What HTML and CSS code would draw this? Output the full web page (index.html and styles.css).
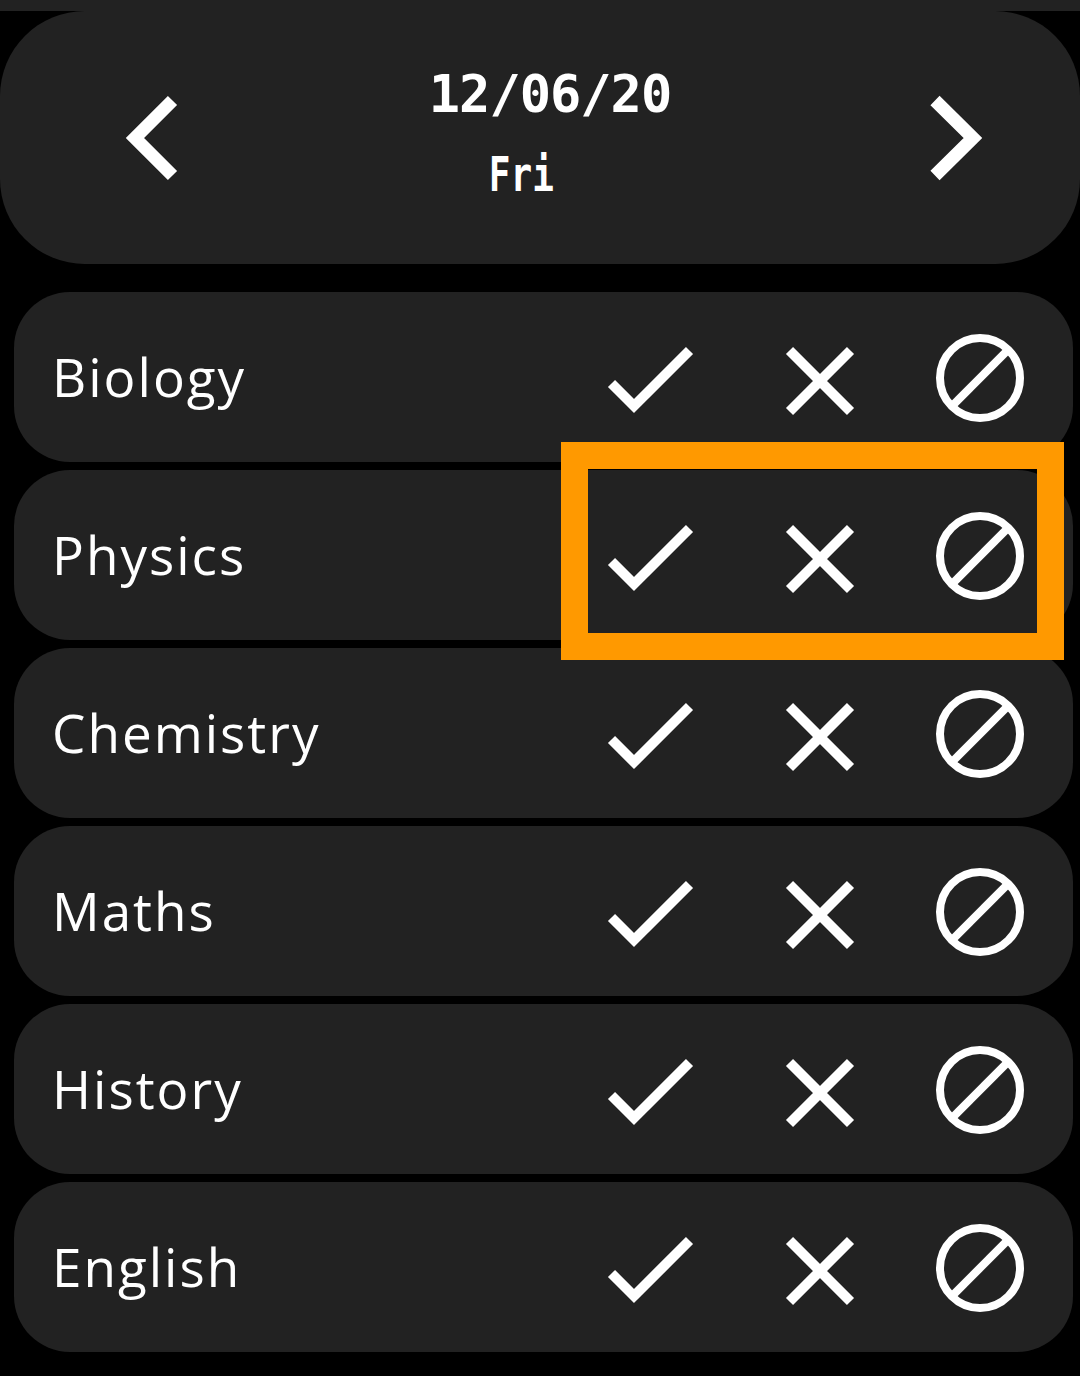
FILE: index.html
```html
<!DOCTYPE html>
<html>
<head>
<meta charset="utf-8">
<link rel="stylesheet" href="styles.css">
</head>
<body>
<div class="topbar"></div>
<header class="datebar">
  <svg class="chev chev-left" width="100" height="100" viewBox="0 0 100 100"><polyline points="72.5,12.5 35,50 72.5,87.5" fill="none" stroke="#fff" stroke-width="13" stroke-linejoin="miter"/></svg>
  <div class="datecol">
    <div class="date">12/06/20</div>
    <div class="day">Fri</div>
  </div>
  <svg class="chev chev-right" width="100" height="100" viewBox="0 0 100 100"><polyline points="35,12.5 73,50 35,87.5" fill="none" stroke="#fff" stroke-width="13" stroke-linejoin="miter"/></svg>
</header>
<main class="list">
  <div class="row"><span class="label">Biology</span><div class="icons">
    <svg class="ic ic-check" width="100" height="100" viewBox="0 0 100 100"><polyline points="11.5,56.5 34,79 89.5,23.5" fill="none" stroke="#fff" stroke-width="10"/></svg>
    <svg class="ic ic-x" width="100" height="100" viewBox="0 0 100 100"><path d="M19.5 23.5 L80.5 84.5 M80.5 23.5 L19.5 84.5" stroke="#fff" stroke-width="10"/></svg>
    <svg class="ic ic-o" width="100" height="100" viewBox="0 0 100 100"><circle cx="50" cy="51" r="40" fill="none" stroke="#fff" stroke-width="8"/><line x1="21.7" y1="79.3" x2="78.3" y2="22.7" stroke="#fff" stroke-width="8"/></svg>
  </div></div>
  <div class="row"><span class="label">Physics</span><div class="icons">
    <svg class="ic ic-check" width="100" height="100" viewBox="0 0 100 100"><polyline points="11.5,56.5 34,79 89.5,23.5" fill="none" stroke="#fff" stroke-width="10"/></svg>
    <svg class="ic ic-x" width="100" height="100" viewBox="0 0 100 100"><path d="M19.5 23.5 L80.5 84.5 M80.5 23.5 L19.5 84.5" stroke="#fff" stroke-width="10"/></svg>
    <svg class="ic ic-o" width="100" height="100" viewBox="0 0 100 100"><circle cx="50" cy="51" r="40" fill="none" stroke="#fff" stroke-width="8"/><line x1="21.7" y1="79.3" x2="78.3" y2="22.7" stroke="#fff" stroke-width="8"/></svg>
  </div></div>
  <div class="row"><span class="label">Chemistry</span><div class="icons">
    <svg class="ic ic-check" width="100" height="100" viewBox="0 0 100 100"><polyline points="11.5,56.5 34,79 89.5,23.5" fill="none" stroke="#fff" stroke-width="10"/></svg>
    <svg class="ic ic-x" width="100" height="100" viewBox="0 0 100 100"><path d="M19.5 23.5 L80.5 84.5 M80.5 23.5 L19.5 84.5" stroke="#fff" stroke-width="10"/></svg>
    <svg class="ic ic-o" width="100" height="100" viewBox="0 0 100 100"><circle cx="50" cy="51" r="40" fill="none" stroke="#fff" stroke-width="8"/><line x1="21.7" y1="79.3" x2="78.3" y2="22.7" stroke="#fff" stroke-width="8"/></svg>
  </div></div>
  <div class="row"><span class="label">Maths</span><div class="icons">
    <svg class="ic ic-check" width="100" height="100" viewBox="0 0 100 100"><polyline points="11.5,56.5 34,79 89.5,23.5" fill="none" stroke="#fff" stroke-width="10"/></svg>
    <svg class="ic ic-x" width="100" height="100" viewBox="0 0 100 100"><path d="M19.5 23.5 L80.5 84.5 M80.5 23.5 L19.5 84.5" stroke="#fff" stroke-width="10"/></svg>
    <svg class="ic ic-o" width="100" height="100" viewBox="0 0 100 100"><circle cx="50" cy="51" r="40" fill="none" stroke="#fff" stroke-width="8"/><line x1="21.7" y1="79.3" x2="78.3" y2="22.7" stroke="#fff" stroke-width="8"/></svg>
  </div></div>
  <div class="row"><span class="label">History</span><div class="icons">
    <svg class="ic ic-check" width="100" height="100" viewBox="0 0 100 100"><polyline points="11.5,56.5 34,79 89.5,23.5" fill="none" stroke="#fff" stroke-width="10"/></svg>
    <svg class="ic ic-x" width="100" height="100" viewBox="0 0 100 100"><path d="M19.5 23.5 L80.5 84.5 M80.5 23.5 L19.5 84.5" stroke="#fff" stroke-width="10"/></svg>
    <svg class="ic ic-o" width="100" height="100" viewBox="0 0 100 100"><circle cx="50" cy="51" r="40" fill="none" stroke="#fff" stroke-width="8"/><line x1="21.7" y1="79.3" x2="78.3" y2="22.7" stroke="#fff" stroke-width="8"/></svg>
  </div></div>
  <div class="row"><span class="label">English</span><div class="icons">
    <svg class="ic ic-check" width="100" height="100" viewBox="0 0 100 100"><polyline points="11.5,56.5 34,79 89.5,23.5" fill="none" stroke="#fff" stroke-width="10"/></svg>
    <svg class="ic ic-x" width="100" height="100" viewBox="0 0 100 100"><path d="M19.5 23.5 L80.5 84.5 M80.5 23.5 L19.5 84.5" stroke="#fff" stroke-width="10"/></svg>
    <svg class="ic ic-o" width="100" height="100" viewBox="0 0 100 100"><circle cx="50" cy="51" r="40" fill="none" stroke="#fff" stroke-width="8"/><line x1="21.7" y1="79.3" x2="78.3" y2="22.7" stroke="#fff" stroke-width="8"/></svg>
  </div></div>
  <div class="highlight"></div>
</main>
</body>
</html>
```
FILE: styles.css
```css
html, body {
  margin: 0;
  padding: 0;
  background: #000;
}
body {
  width: 1080px;
  height: 1376px;
  overflow: hidden;
  font-family: "Open Sans", "Lato", sans-serif;
  color: #fff;
}
.topbar {
  height: 11px;
  background: #222222;
}
.datebar {
  height: 253px;
  background: #222222;
  border-radius: 85px;
  display: flex;
  align-items: center;
}
.chev {
  flex: none;
  display: block;
}
.chev-left {
  margin-left: 100px;
}
.chev-right {
  margin-right: 80px;
}
.datecol {
  flex: 1;
  display: flex;
  flex-direction: column;
  align-items: center;
  font-family: "DejaVu Sans Mono", monospace;
  font-weight: bold;
  align-self: flex-start;
  padding-top: 53px;
}
.date {
  font-size: 52px;
  line-height: 60px;
  letter-spacing: -1px;
}
.day {
  font-size: 48px;
  line-height: 56px;
  margin-top: 22px;
  margin-right: 58px;
  transform: scaleX(0.75);
}
.list {
  position: relative;
  margin-top: 28px;
  padding: 0 7px 0 14px;
  display: flex;
  flex-direction: column;
  gap: 8px;
}
.row {
  height: 170px;
  background: #222222;
  border-radius: 56px;
  display: flex;
  align-items: center;
  justify-content: space-between;
  padding-left: 38px;
  padding-right: 43px;
}
.label {
  font-size: 53px;
  letter-spacing: 2px;
  line-height: 1;
  margin-top: -2px;
}
.icons {
  display: flex;
  align-items: center;
}
.ic {
  display: block;
  flex: none;
}
.ic-x {
  margin-left: 70px;
}
.ic-o {
  margin-left: 60px;
}
.highlight {
  position: absolute;
  left: 561px;
  top: 150px;
  width: 449px;
  height: 164px;
  border: 27px solid #ff9900;
}
```
